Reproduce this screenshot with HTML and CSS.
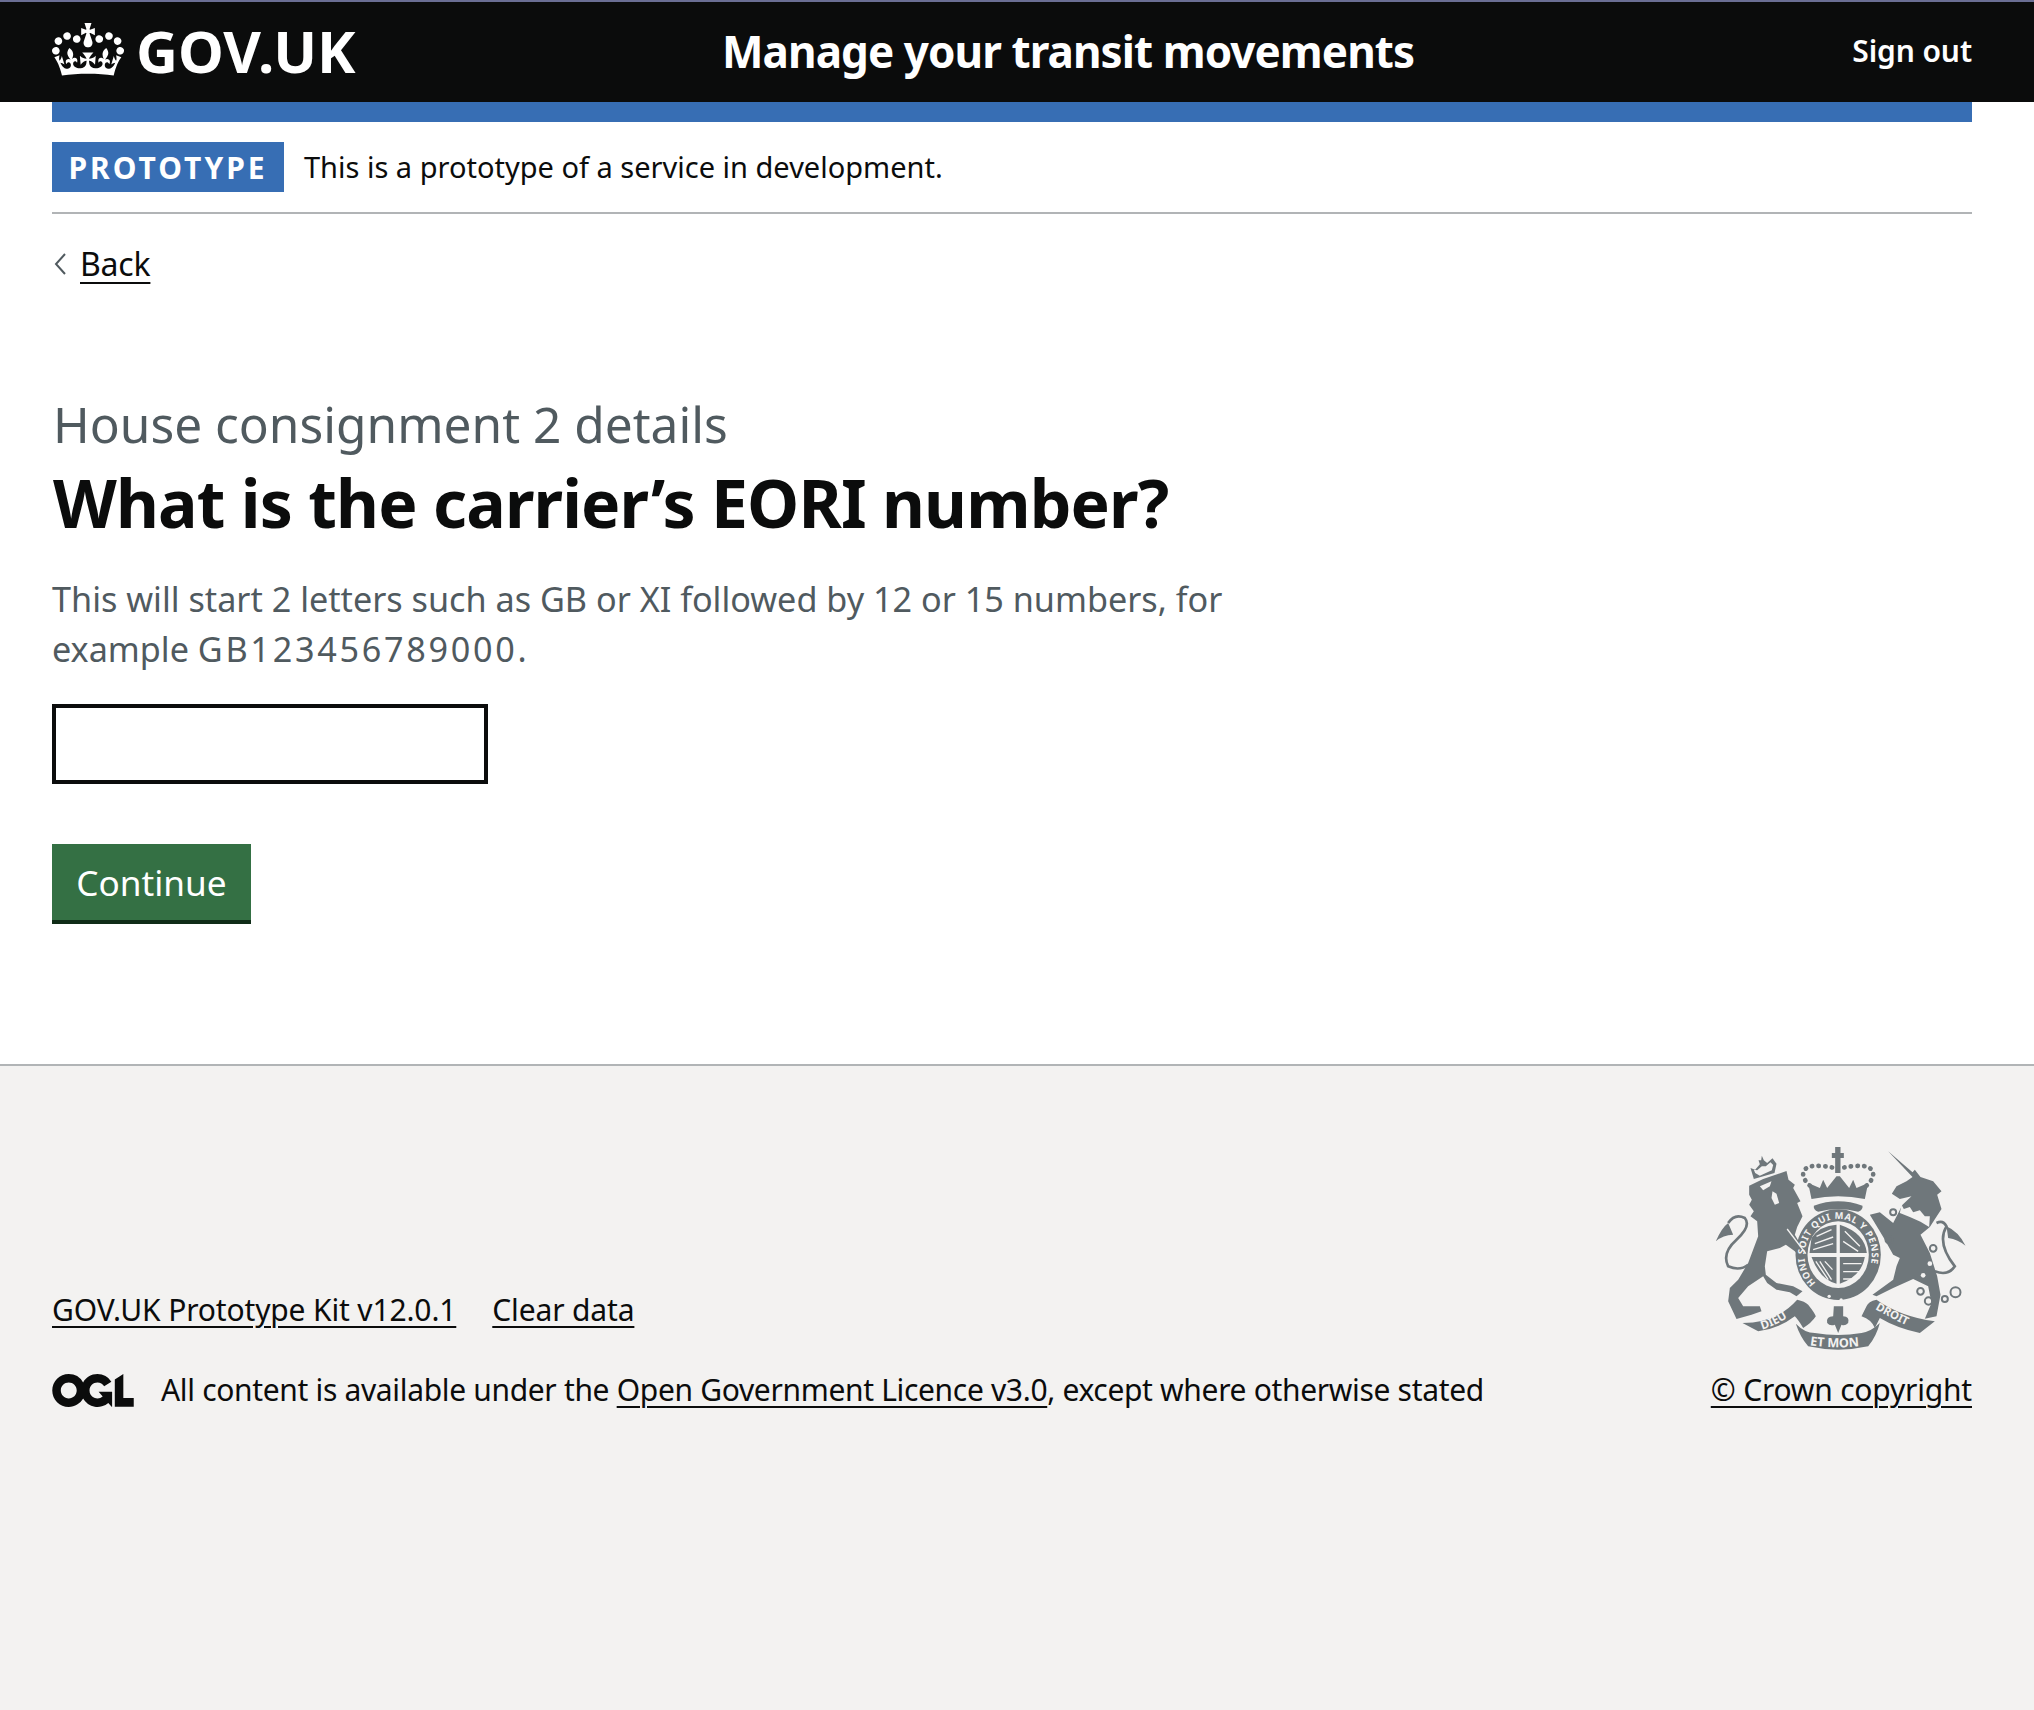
FILE: index.html
```html
<!DOCTYPE html>
<html lang="en">
<head>
    <meta charset="UTF-8">
    <title>What is the carrier's EORI number?</title>
    <link rel="stylesheet" href="styles.css">
</head>
<body>

    <header class="top-bar">
        <a class="logo" href="#">
            <svg class="crown" viewBox="0 0 132 97" aria-hidden="true"><path fill="currentColor" d="M25 30.2c3.5 1.5 7.7-.2 9.1-3.7 1.5-3.6-.2-7.8-3.9-9.2-3.6-1.4-7.6.3-9.1 3.9-1.4 3.5.3 7.5 3.9 9zM9 39.5c3.6 1.5 7.8-.2 9.2-3.7 1.5-3.6-.2-7.8-3.9-9.1-3.6-1.5-7.6.2-9.1 3.8-1.4 3.5.3 7.5 3.8 9zM4.4 57.2c3.5 1.5 7.7-.2 9.1-3.8 1.5-3.6-.2-7.7-3.9-9.1-3.5-1.5-7.6.3-9.1 3.8-1.4 3.5.3 7.6 3.9 9.1zm38.3-21.4c3.5 1.5 7.7-.2 9.1-3.8 1.5-3.6-.2-7.7-3.9-9.1-3.6-1.5-7.6.3-9.1 3.8-1.3 3.6.4 7.7 3.9 9.1zm64.4-5.6c-3.6 1.5-7.8-.2-9.1-3.7-1.5-3.6.2-7.8 3.8-9.2 3.6-1.4 7.7.3 9.2 3.9 1.3 3.5-.4 7.5-3.9 9zm15.9 9.3c-3.6 1.5-7.7-.2-9.1-3.7-1.5-3.6.2-7.8 3.7-9.1 3.6-1.5 7.7.2 9.2 3.8 1.5 3.5-.3 7.5-3.8 9zm4.7 17.7c-3.6 1.5-7.8-.2-9.2-3.8-1.5-3.6.2-7.7 3.9-9.1 3.6-1.5 7.7.3 9.2 3.8 1.3 3.5-.4 7.6-3.9 9.1zM89.3 35.8c-3.6 1.5-7.8-.2-9.2-3.8-1.4-3.6.2-7.7 3.9-9.1 3.6-1.5 7.7.3 9.2 3.8 1.4 3.6-.3 7.7-3.9 9.1zM69.7 17.7l8.9 4.7V9.3l-8.9 2.8c-.2-.3-.5-.6-.9-.9L72.4 0H59.6l3.6 11.2c-.3.3-.6.5-.9.9l-8.8-2.8v13.1l8.8-4.7c.3.3.6.7.9.9l-5 15.4v.1c-.2.8-.4 1.6-.4 2.4 0 4.1 3.1 7.5 7 8.1h.2c.3 0 .7.1 1 .1.4 0 .7 0 1-.1h.2c4-.6 7.1-4.1 7.1-8.1 0-.8-.1-1.7-.4-2.4V34l-5.1-15.4c.4-.2.7-.6 1-.9zM66 92.8c16.9 0 32.8 1.1 47.1 3.2 4-16.9 8.9-26.7 14-33.5l-9.6-3.4c1 4.9 1.1 7.2 0 10.2-1.5-1.4-3-4.3-4.2-8.7L108.6 76c2.8-2 5-3.2 7.5-3.3-4.4 9.4-10 11.9-13.6 11.2-4.3-.8-6.3-4.6-5.6-7.9 1-4.7 5.7-5.9 8-.5 4.3-8.7-3-11.4-7.6-8.8 7.1-7.2 7.9-13.5 2.1-21.1-8 6.1-8.1 12.3-4.5 20.8-4.7-5.4-12.1-2.5-9.5 6.2 3.4-5.2 7.9-2 7.2 3.1-.6 4.3-6.4 7.8-13.5 7.2-10.3-.9-10.9-8-11.2-13.8 2.5-.5 7.1 1.8 11 7.3L80.2 60c-4.1 4.4-8 5.3-12.3 5.4 1.4-4.4 8-11.6 8-11.6H55.5s6.4 7.2 7.9 11.6c-4.2-.1-8-1-12.3-5.4l1.4 16.4c3.9-5.5 8.5-7.7 10.9-7.3-.3 5.8-.9 12.8-11.1 13.8-7.2.6-12.9-2.9-13.5-7.2-.7-5 3.8-8.3 7.1-3.1 2.7-8.7-4.6-11.6-9.4-6.2 3.7-8.5 3.6-14.7-4.6-20.8-5.8 7.6-5 13.9 2.2 21.1-4.7-2.6-11.9.1-7.7 8.8 2.3-5.5 7.1-4.2 8.1.5.7 3.3-1.3 7.1-5.7 7.9-3.5.7-9-1.8-13.5-11.2 2.5.1 4.7 1.3 7.5 3.3l-4.7-15.4c-1.2 4.4-2.7 7.2-4.3 8.7-1.1-3-.9-5.3 0-10.2l-9.5 3.4c5 6.9 9.9 16.7 14 33.5 14.8-2.1 30.8-3.2 47.7-3.2z"/></svg>
            <span class="logo-text">GOV.UK</span>
        </a>
        <a class="service-name" href="#">Manage your transit movements</a>
        <a class="sign-out" href="#">Sign out</a>
    </header>

    <div class="width-container">
        <div class="blue-bar"></div>

        <div class="phase-banner">
            <strong class="tag">PROTOTYPE</strong>
            <span class="phase-text">This is a prototype of a service in development.</span>
        </div>

        <a class="back-link" href="#">
            <svg class="chevron" viewBox="0 0 14 24" aria-hidden="true"><path d="M12 2 3 12l9 10" fill="none" stroke="#505a5f" stroke-width="2"/></svg>
            <span>Back</span>
        </a>

        <main class="main">
            <span class="caption">House consignment 2 details</span>
            <h1 class="heading">What is the carrier’s EORI number?</h1>
            <div class="hint">This will start 2 letters such as GB or XI followed by 12 or 15 numbers, for example <span class="eori-example">GB123456789000</span>.</div>
            <input class="text-input" type="text">
            <button class="button">Continue</button>
        </main>
    </div>

    <footer class="footer">
        <div class="footer-inner">
            <div class="footer-meta">
                <div class="footer-links">
                    <a href="#">GOV.UK Prototype Kit v12.0.1</a>
                    <a href="#">Clear data</a>
                </div>
                <div class="licence">
                    <svg class="ogl" viewBox="0 0 483.2 195.7" aria-hidden="true"><path fill="currentColor" d="M421.5 142.8V.1l-50.7 32.3v161.1h112.4v-50.7zm-122.3-9.6A47.12 47.12 0 0 1 221 97.8c0-26 21.1-47.1 47.1-47.1 16.7 0 31.4 8.7 39.7 21.8l42.7-27.2A97.63 97.63 0 0 0 268.1 0c-36.5 0-68.3 20.1-85.1 49.7A98 98 0 0 0 97.8 0C43.9 0 0 43.9 0 97.8s43.9 97.8 97.8 97.8c36.5 0 68.3-20.1 85.1-49.7a97.76 97.76 0 0 0 149.6 25.4l19.4 22.2h3v-87.8h-80l24.3 27.5zM97.8 145c-26 0-47.1-21.1-47.1-47.1s21.1-47.1 47.1-47.1 47.2 21 47.2 47S123.8 145 97.8 145"/></svg>
                    <span>All content is available under the <a href="#">Open Government Licence v3.0</a>, except where otherwise stated</span>
                </div>
            </div>
            <div class="copyright">
                <svg class="arms" viewBox="100 70 770 630" aria-hidden="true">
                    <defs>
                        <path id="garter-arc" d="M408 490A101 110 0 1 1 542 490"/>
                        <path id="ribbon-left" d="M247 630Q305 612 352 572"/>
                        <path id="ribbon-mid" d="M388 676Q475 690 562 676"/>
                        <path id="ribbon-right" d="M586 568Q640 600 712 632"/>
                    </defs>
                    <g fill="#6f777b">
                        <!-- lion -->
                        <path d="M208 198 250 178 320 154 326 180 345 195 340 205 362 245 352 250 368 290 352 322 345 345 380 405 370 430 345 395 318 375 300 385 262 395 255 440 258 465 290 490 340 500 368 515 350 530 330 518 290 510 262 490 250 470 205 500 175 535 190 560 240 560 245 575 215 585 170 598 145 545 150 505 175 480 205 430 235 350 232 305 212 290 222 275 208 255 216 240 208 225Z"/>
                        <!-- unicorn -->
                        <path d="M625 95 698 158 705 150 722 172 760 185 785 215 772 225 785 268 764 300 750 322 722 345 750 400 772 470 782 525 770 590 735 597 755 550 745 500 700 478 640 505 590 530 578 525 640 480 650 440 660 415 640 405 612 355 570 285 600 278 640 310 668 255 695 230 660 238 636 222 650 200 680 185 698 172Z"/>
                        <!-- big crown -->
                        <path d="M395 238 385 190 420 205 430 180 442 205 470 170 480 170 508 205 520 180 530 205 565 190 555 238Q475 222 395 238Z"/>
                        <path d="M402 258Q475 232 548 258 550 270 535 276 475 262 415 276 400 270 402 258Z"/>
                        <path d="M466 160V115H456V100H466V82H482V100H492V115H482V160Z"/>
                        <!-- garter -->
                        <ellipse cx="475" cy="405" rx="128" ry="136"/>
                        <!-- fleur de lis under the shield -->
                        <path d="M462 560H490V590Q510 590 505 610 495 620 485 615L475 640 465 615Q450 620 442 610 438 590 460 590Z"/>
                        <!-- ribbon -->
                        <path d="M188 610Q290 610 352 540 375 545 385 555 405 580 408 590 395 610 370 625 355 600 345 590 300 625 235 635Z"/>
                        <path d="M348 612Q375 640 405 640 475 652 545 640 575 635 600 610 590 650 565 680 475 700 385 680 360 650 348 612Z"/>
                        <path d="M765 605Q660 590 590 540 565 545 560 560L545 590Q575 600 585 625L600 595Q650 625 720 640Z"/>
                        <!-- lion's crown -->
                        <path d="M222 178 212 145 226 150 240 134 236 122 244 122 246 108 252 122 262 130 278 116 290 132 284 160Z"/>
                    </g>
                    <!-- crown beads, tails, unicorn's chain -->
                    <g fill="none" stroke="#6f777b">
                        <path stroke-width="14" stroke-dasharray="1 19" stroke-linecap="round" d="M390 198Q360 170 375 150T466 145"/>
                        <path stroke-width="14" stroke-dasharray="1 19" stroke-linecap="round" d="M560 198Q590 170 575 150T484 145"/>
                        <path stroke-width="8" d="M205 435Q180 455 145 440 125 400 170 360 215 320 195 295 165 280 145 310"/>
                        <path stroke-width="8" d="M770 310Q790 300 800 320 770 370 825 440 805 470 765 455"/>
                        <circle stroke-width="6" cx="722" cy="515" r="10"/>
                        <circle stroke-width="6" cx="746" cy="544" r="11"/>
                        <circle stroke-width="6" cx="795" cy="538" r="9"/>
                        <circle stroke-width="6" cx="827" cy="518" r="15"/>
                        <circle stroke-width="6" cx="640" cy="278" r="9"/>
                        <circle stroke-width="6" cx="628" cy="360" r="11"/>
                        <circle stroke-width="6" cx="760" cy="386" r="10"/>
                    </g>
                    <g fill="#6f777b">
                        <path d="M145 310Q125 325 108 365 130 345 160 345ZM800 320Q835 335 857 378 835 360 805 355Z"/>
                    </g>
                    <!-- the light parts on top -->
                    <g fill="#f3f2f1">
                        <ellipse cx="475" cy="405" rx="92" ry="100"/>
                        <path d="M665 255 672 268 690 262 700 278 720 272 735 290 750 290 748 322 722 306 690 292 660 280Z"/>
                        <path d="M240 200 275 185 270 200 250 212ZM278 215 290 222 298 250 285 255 275 235Z"/>
                        <path d="M226 160 222 150 232 152 246 140 258 140 272 128 280 136 276 152 240 168Z"/>
                        <circle cx="448" cy="530" r="5"/>
                        <circle cx="484" cy="541" r="5"/>
                        <circle cx="730" cy="467" r="7"/>
                        <circle cx="750" cy="432" r="7"/>
                    </g>
                    <path d="M322 328 378 402" stroke="#f3f2f1" stroke-width="4" fill="none"/>
                    <g fill="#6f777b">
                        <path d="M389 400H470V315Q420 318 395 355ZM480 315V400H561Q555 340 480 315Z"/>
                        <path d="M395 412H470V492Q420 480 395 412ZM480 412H555Q545 470 480 492Z"/>
                    </g>
                    <path fill="none" stroke="#f3f2f1" stroke-width="4" d="M410 350 455 330M405 372 460 352M400 390 460 372M495 335 540 380M490 365 535 395M490 432 545 432M490 456 540 456M490 478 525 478M420 425 455 480M435 425 458 450M408 425 445 480"/>
                    <g class="arms-text" fill="#f3f2f1">
                        <text font-size="28" letter-spacing="2"><textPath href="#garter-arc">HONI SOIT QUI MAL Y PENSE</textPath></text>
                        <text font-size="35"><textPath href="#ribbon-left">DIEU</textPath></text>
                        <text font-size="38"><textPath href="#ribbon-mid" startOffset="2">ET MON</textPath></text>
                        <text font-size="34"><textPath href="#ribbon-right">DROIT</textPath></text>
                    </g>
                </svg>
                <a href="#">© Crown copyright</a>
            </div>
        </div>
    </footer>

</body>
</html>
```

FILE: styles.css
```css
body {
    font-family: "Noto Sans", Arial, sans-serif;
    margin: 0;
    padding: 0;
    min-height: 100vh;
    display: flex;
    flex-direction: column;
    color: #0b0c0c;
    background-color: #ffffff;
}

a {
    color: inherit;
}

.top-bar {
    height: 100px;
    box-sizing: content-box;
    border-top: 2px solid #6b6f94;
    padding: 0 62px 0 52px;
    background-color: #0b0c0c;
    color: white;
    display: flex;
    align-items: center;
}

.top-bar a {
    text-decoration: none;
}

.logo {
    width: 670px;
    display: flex;
    align-items: center;
    gap: 12px;
}

.crown {
    width: 72px;
    height: 53px;
    margin-bottom: 5px;
}

.logo-text {
    font-size: 58px;
    font-weight: 700;
    letter-spacing: 0;
    line-height: 1;
    margin-bottom: 2px;
}

.service-name {
    font-size: 44px;
    font-weight: 700;
    letter-spacing: -0.93px;
    margin-bottom: 3px;
}

.sign-out {
    margin-left: auto;
    font-size: 30px;
    font-weight: 600;
    letter-spacing: -0.1px;
    margin-bottom: 4px;
}

.width-container {
    margin: 0 62px 0 52px;
}

.blue-bar {
    height: 20px;
    background-color: #376eb4;
}

.phase-banner {
    display: flex;
    align-items: center;
    gap: 20px;
    padding: 20px 0;
    border-bottom: 2px solid #b1b4b6;
    font-size: 29px;
}

.phase-text {
    margin-bottom: 2px;
}

.tag {
    width: 232px;
    height: 50px;
    display: flex;
    align-items: center;
    justify-content: center;
    background-color: #376eb4;
    color: white;
    font-size: 30px;
    font-weight: 700;
    letter-spacing: 3px;
}

.back-link {
    display: inline-flex;
    align-items: center;
    gap: 12px;
    margin-top: 30px;
    font-size: 32px;
    line-height: 40px;
    letter-spacing: -0.2px;
    text-decoration: none;
}

.back-link span {
    text-underline-offset: 6px;
    text-decoration: underline;
    text-decoration-thickness: 2px;
}

.back-link .chevron {
    width: 16px;
    height: 24px;
}

.main {
    display: block;
    padding-top: 109px;
    padding-bottom: 140px;
}

.caption {
    display: block;
    color: #505a5f;
    font-size: 49.6px;
    line-height: 62px;
    margin-left: 1px;
}

.heading {
    margin: 5px 0 30px 1px;
    font-size: 66px;
    line-height: 84px;
    font-weight: 700;
    letter-spacing: -0.85px;
}

.hint {
    width: 1200px;
    color: #505a5f;
    font-size: 34.2px;
    line-height: 50px;
    margin-bottom: 30px;
}

.eori-example {
    letter-spacing: 2.7px;
}

.text-input {
    display: block;
    box-sizing: border-box;
    width: 436px;
    height: 80px;
    border: 4px solid #0b0c0c;
    border-radius: 0;
    background-color: white;
    margin-bottom: 60px;
}

.button {
    display: block;
    width: 199px;
    height: 80px;
    padding: 0 0 4px 0;
    border: none;
    border-radius: 0;
    background-color: #347044;
    box-shadow: inset 0 -4px 0 #0f2c17;
    color: white;
    font-family: inherit;
    font-size: 35.2px;
}

.footer {
    flex-grow: 1;
    border-top: 2px solid #b1b4b6;
    background-color: #f3f2f1;
    padding: 77px 62px 0 52px;
    box-sizing: border-box;
}

.footer-inner {
    display: flex;
    justify-content: space-between;
    align-items: flex-end;
}

.footer-meta a,
.copyright a {
    text-underline-offset: 5px;
    text-decoration-thickness: 2px;
}

.footer-links {
    display: flex;
    gap: 36px;
    font-size: 30px;
    line-height: 40px;
    margin-bottom: 39px;
    letter-spacing: -0.15px;
}

.licence {
    display: flex;
    align-items: center;
    gap: 27px;
    font-size: 30px;
    line-height: 42px;
    letter-spacing: -0.33px;
}

.ogl {
    width: 82px;
    height: 33px;
}

.copyright {
    display: flex;
    flex-direction: column;
    align-items: center;
    font-size: 30px;
    line-height: 42px;
    letter-spacing: -0.2px;
}

.arms {
    width: 257px;
    height: 210px;
    margin-bottom: 16px;
}

.arms-text {
    font-family: "Noto Sans", Arial, sans-serif;
    font-weight: 700;
}
```
